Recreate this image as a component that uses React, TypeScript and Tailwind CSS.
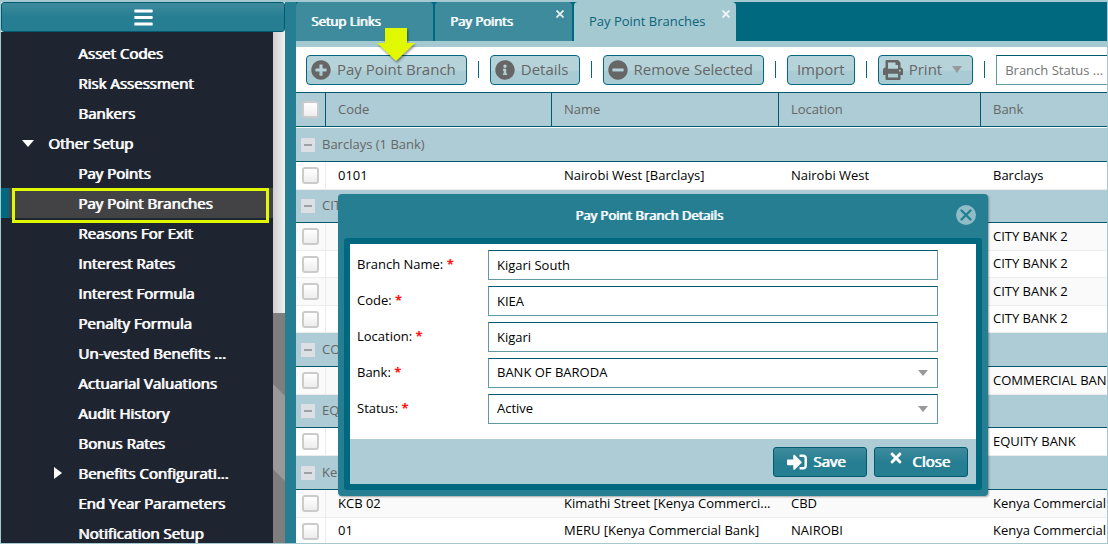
import React from "react";
import {
  FaBars,
  FaInfoCircle,
  FaMinusCircle,
  FaPlusCircle,
  FaPrint,
  FaSignInAlt,
  FaTimes,
} from "react-icons/fa";

type MenuItem = { label: string; kind?: "open" | "closed" | "selected" };

const menu: MenuItem[] = [
  { label: "Asset Codes" },
  { label: "Risk Assessment" },
  { label: "Bankers" },
  { label: "Other Setup", kind: "open" },
  { label: "Pay Points" },
  { label: "Pay Point Branches", kind: "selected" },
  { label: "Reasons For Exit" },
  { label: "Interest Rates" },
  { label: "Interest Formula" },
  { label: "Penalty Formula" },
  { label: "Un-vested Benefits ..." },
  { label: "Actuarial Valuations" },
  { label: "Audit History" },
  { label: "Bonus Rates" },
  { label: "Benefits Configurati...", kind: "closed" },
  { label: "End Year Parameters" },
  { label: "Notification Setup" },
];

type Branch = { code: string; name: string; location: string; bank: string; alt?: boolean };

const groups: { title: string; rows: Branch[] }[] = [
  {
    title: "Barclays (1 Bank)",
    rows: [{ code: "0101", name: "Nairobi West [Barclays]", location: "Nairobi West", bank: "Barclays" }],
  },
  {
    title: "CIT",
    rows: [
      { code: "", name: "", location: "", bank: "CITY BANK 2", alt: true },
      { code: "", name: "", location: "", bank: "CITY BANK 2" },
      { code: "", name: "", location: "", bank: "CITY BANK 2", alt: true },
      { code: "", name: "", location: "", bank: "CITY BANK 2" },
    ],
  },
  { title: "CO", rows: [{ code: "", name: "", location: "", bank: "COMMERCIAL BANK", alt: true }] },
  { title: "EQ", rows: [{ code: "", name: "", location: "", bank: "EQUITY BANK" }] },
  {
    title: "Ken",
    rows: [
      { code: "KCB 02", name: "Kimathi Street [Kenya Commerci...", location: "CBD", bank: "Kenya Commercial", alt: true },
      { code: "01", name: "MERU [Kenya Commercial Bank]", location: "NAIROBI", bank: "Kenya Commercial" },
    ],
  },
];

function Tick({ label }: { label: string }) {
  return (
    <input
      type="checkbox"
      aria-label={label}
      className="ml-1.5 block size-[17px] appearance-none rounded-[3px] border-2 border-[#cbcbcb] bg-linear-to-b from-white to-[#ededed]"
    />
  );
}

function Sidebar() {
  return (
    <aside className="flex w-[284px] shrink-0 flex-col">
      <button
        aria-label="Toggle menu"
        className="flex h-[30px] shrink-0 items-center justify-center rounded-[3px] border border-[#005a70] bg-linear-to-b from-[#3e8b9d] from-0% via-[#267e92] via-50% to-[#267e92] text-white"
      >
        <FaBars size={21} />
      </button>
      <div className="flex min-h-0 flex-1">
        <nav className="min-w-0 flex-1 overflow-hidden bg-[#1f2530] text-[15px] text-white [text-shadow:1px_0_0_currentColor]">
          <ul className="pt-1.5">
            {menu.map((item) => (
              <li key={item.label} className={item.kind === "selected" ? "relative bg-[#434346]" : ""}>
                <a
                  href="#"
                  className={
                    "flex h-[30px] items-center whitespace-nowrap " +
                    (item.kind === "open"
                      ? "gap-3.5 pl-[21px]"
                      : item.kind === "closed"
                        ? "gap-4 pl-[53px]"
                        : item.kind === "selected"
                          ? "border-l-8 border-[#00687f] pl-[69px]"
                          : "pl-[77px]")
                  }
                >
                  {item.kind === "open" && (
                    <svg width="12" height="7" viewBox="0 0 12 7" className="fill-white">
                      <path d="M0 0h12L6 7z" />
                    </svg>
                  )}
                  {item.kind === "closed" && (
                    <svg width="8" height="12" viewBox="0 0 8 12" className="fill-white">
                      <path d="M0 0l8 6-8 6z" />
                    </svg>
                  )}
                  {item.label}
                </a>
                {item.kind === "selected" && (
                  <span className="pointer-events-none absolute top-0 right-1 -bottom-[5px] left-[11px] border-3 border-[#e0f800]" />
                )}
              </li>
            ))}
          </ul>
        </nav>
        <div className="flex w-3 shrink-0 flex-col">
          <div className="h-[281px] bg-linear-to-r from-[#cfcfcf] to-[#f0f0f0]" />
          <div className="min-h-0 flex-1 bg-[#7e7e7e]">
            <svg width="12" height="230" viewBox="0 0 12 230">
              <path d="M0 71l12 12v85L0 156z" fill="#999999" />
            </svg>
          </div>
        </div>
      </div>
    </aside>
  );
}

function Tabs() {
  return (
    <div className="flex h-[45px] shrink-0 gap-0.5 border-b-6 border-[#a5c9d1] bg-[#00687f] text-[13px] text-white">
      <button className="flex w-[137px] items-center rounded-t-[4px] bg-[#3d8b9d] px-[15px] [text-shadow:1px_0_0_currentColor]">
        Setup Links
      </button>
      <button className="relative flex w-[137px] items-center rounded-t-[4px] bg-[#3d8b9d] px-[15px] [text-shadow:1px_0_0_currentColor]">
        Pay Points
        <svg className="absolute top-2 right-2" width="8" height="8" viewBox="0 0 8 8" stroke="#e8f2f4" strokeWidth="1.8">
          <path d="M.5 .5l7 7M7.5 .5l-7 7" />
        </svg>
      </button>
      <button className="relative flex w-[162px] items-center rounded-t-[4px] bg-[#a5c9d1] px-[15px] text-[#0c647a]">
        Pay Point Branches
        <svg className="absolute top-2 right-1.5" width="8" height="8" viewBox="0 0 8 8" stroke="#f2f8f9" strokeWidth="1.8">
          <path d="M.5 .5l7 7M7.5 .5l-7 7" />
        </svg>
      </button>
    </div>
  );
}

function ToolButton({ icon, children }: { icon?: React.ReactNode; children: React.ReactNode }) {
  return (
    <button
      className={
        "flex h-[30px] shrink-0 items-center gap-1.5 rounded-[4px] border border-[#00687f] bg-linear-to-b from-[#b6d3da] from-50% to-[#a9cbd3] to-55% font-medium whitespace-nowrap text-[#666] " +
        (icon ? "pr-2.5 pl-1" : "px-[9px]")
      }
    >
      {icon}
      {children}
    </button>
  );
}

function Divider() {
  return <span className="h-[17px] w-px shrink-0 bg-[#00687f]" />;
}

function Toolbar() {
  return (
    <div className="relative flex h-[45px] shrink-0 items-center gap-[11px] bg-white pl-2.5 text-[15px]">
      <ToolButton icon={<FaPlusCircle size={20} />}>Pay Point Branch</ToolButton>
      <Divider />
      <ToolButton icon={<FaInfoCircle size={20} />}>Details</ToolButton>
      <Divider />
      <ToolButton icon={<FaMinusCircle size={20} />}>Remove Selected</ToolButton>
      <Divider />
      <ToolButton>Import</ToolButton>
      <Divider />
      <ToolButton icon={<FaPrint size={20} />}>
        Print
        <svg className="ml-1" width="10" height="7" viewBox="0 0 10 7" fill="#999">
          <path d="M0 0h10L5 7z" />
        </svg>
      </ToolButton>
      <Divider />
      <input
        aria-label="Branch status"
        placeholder="Branch Status ..."
        className="h-[30px] w-[150px] shrink-0 border border-[#5f9aa5] border-t-[#00596f] px-2 text-[13px] placeholder:text-[#757575]"
      />
      <svg
        className="absolute -top-[19px] left-20 drop-shadow-[1px_2px_1px_rgba(0,0,0,0.4)]"
        width="40"
        height="34"
        viewBox="0 0 40 34"
      >
        <path d="M9 0h22v15h8L20 33 1 15h8z" fill="#e0f800" />
      </svg>
    </div>
  );
}

function Grid() {
  const th = "border-r border-[#00596f] pl-3 text-left font-normal";
  const td = "truncate border-b border-[#ececec] pl-3";
  return (
    <table className="w-full table-fixed border-separate border-spacing-0 text-[13px] text-black">
      <colgroup>
        <col className="w-[30px]" />
        <col className="w-[226px]" />
        <col className="w-[227px]" />
        <col className="w-[202px]" />
        <col />
      </colgroup>
      <thead className="bg-[#adccd5] text-[#666]">
        <tr className="h-[35px]">
          <th className="border-y border-r border-[#00596f]">
            <Tick label="Select all" />
          </th>
          <th className={th + " border-y"}>Code</th>
          <th className={th + " border-y"}>Name</th>
          <th className={th + " border-y"}>Location</th>
          <th className="border-y border-[#00596f] pl-3 text-left font-normal">Bank</th>
        </tr>
      </thead>
      {groups.map((group, g) => (
        <tbody key={group.title}>
          <tr className={g === 0 ? "h-[35px]" : g % 2 ? "h-[33px]" : "h-[34px]"}>
            <td
              colSpan={5}
              className={
                "border-b border-b-[#00596f] bg-[#adccd5] pl-[5px] text-[#666] " +
                (g === 0 ? "border-t border-t-white" : "")
              }
            >
              <div className="flex items-center gap-[7px]">
                <button aria-label="Collapse group" className="flex size-3.5 items-center justify-center bg-[#dcdfe3]">
                  <span className="h-0.5 w-2 bg-[#a0a0a4]" />
                </button>
                {group.title}
              </div>
            </td>
          </tr>
          {group.rows.map((row, r) => (
            <tr key={r} className={(r % 2 ? "h-[27px] " : "h-7 ") + (row.alt ? "bg-[#fafafa]" : "bg-white")}>
              <td className="border-r border-b border-[#ececec]">
                <Tick label={"Select branch " + (row.code || row.bank)} />
              </td>
              <td className={td}>{row.code}</td>
              <td className={td}>{row.name}</td>
              <td className={td}>{row.location}</td>
              <td className="overflow-hidden border-b border-[#ececec] pl-3 whitespace-nowrap">{row.bank}</td>
            </tr>
          ))}
        </tbody>
      ))}
    </table>
  );
}

const fieldBox = "h-[30px] w-full appearance-none border border-[#5f9aa5] border-t-[#00596f] bg-white px-2";

function Field({ id, label, children }: { id: string; label: string; children: React.ReactNode }) {
  return (
    <div className="flex items-center">
      <label htmlFor={id} className="w-[131px] shrink-0">
        {label}: <span className="font-bold text-[#ff1010]">*</span>
      </label>
      <div className="relative flex-1">{children}</div>
    </div>
  );
}

function Choice({ id, value }: { id: string; value: string }) {
  return (
    <>
      <select id={id} defaultValue={value} className={fieldBox}>
        <option>{value}</option>
      </select>
      <svg className="pointer-events-none absolute top-3 right-2.5" width="10" height="6" viewBox="0 0 10 6" fill="#999">
        <path d="M0 0h10L5 6z" />
      </svg>
    </>
  );
}

function BranchDialog() {
  const action =
    "flex h-[30px] w-[94px] items-center rounded-[3px] border border-[#005a70] bg-linear-to-b from-[#3e8b9d] from-0% via-[#267e92] via-50% to-[#267e92] [text-shadow:1px_0_0_currentColor]";
  return (
    <section
      role="dialog"
      aria-labelledby="dialog-title"
      className="absolute top-[194px] left-[338px] w-[650px] rounded-[4px] bg-[#267e92] p-1.5 pt-0 text-[13px] text-black shadow-[1px_1px_2px_rgba(0,0,0,0.35)]"
    >
      <header className="relative flex h-11 items-center justify-center pr-7 text-white">
        <h2 id="dialog-title" className="[text-shadow:1px_0_0_currentColor]">
          Pay Point Branch Details
        </h2>
        <button aria-label="Close dialog" className="absolute top-[11px] right-1.5">
          <svg width="20" height="20" viewBox="0 0 20 20">
            <circle cx="10" cy="10" r="10" fill="#8fbcc6" />
            <path d="M5.5 5.5l9 9M14.5 5.500l-9 9" stroke="#267e92" strokeWidth="2.4" strokeLinecap="round" />
          </svg>
        </button>
      </header>
      <div className="rounded-[3px] border-6 border-[#00687f] bg-white">
        <form className="flex flex-col gap-1.5 pt-1.5 pr-[38px] pb-[15px] pl-[7px]">
          <Field id="branch" label="Branch Name">
            <input id="branch" defaultValue="Kigari South" className={fieldBox} />
          </Field>
          <Field id="code" label="Code">
            <input id="code" defaultValue="KIEA" className={fieldBox} />
          </Field>
          <Field id="location" label="Location">
            <input id="location" defaultValue="Kigari" className={fieldBox} />
          </Field>
          <Field id="bank" label="Bank">
            <Choice id="bank" value="BANK OF BARODA" />
          </Field>
          <Field id="status" label="Status">
            <Choice id="status" value="Active" />
          </Field>
        </form>
        <footer className="flex h-[45px] items-center justify-end gap-[7px] bg-[#adccd5] pr-2 text-[15px] text-white">
          <button className={action + " gap-1.5 pl-[13px]"}>
            <FaSignInAlt size={20} />
            Save
          </button>
          <button className={action + " gap-2 pl-[13px]"}>
            <FaTimes size={16} className="mb-2" />
            Close
          </button>
        </footer>
      </div>
    </section>
  );
}

export default function App() {
  return (
    <div className="relative flex h-screen overflow-hidden border border-t-2 border-[#a5c9d1] bg-white font-['Open_Sans','Noto_Sans',sans-serif]">
      <Sidebar />
      <div className="w-[11px] shrink-0 bg-[#267e92]" />
      <main className="flex min-w-0 flex-1 flex-col overflow-hidden">
        <Tabs />
        <Toolbar />
        <Grid />
      </main>
      <div className="absolute -top-0.5 -left-px">
        <BranchDialog />
      </div>
    </div>
  );
}
